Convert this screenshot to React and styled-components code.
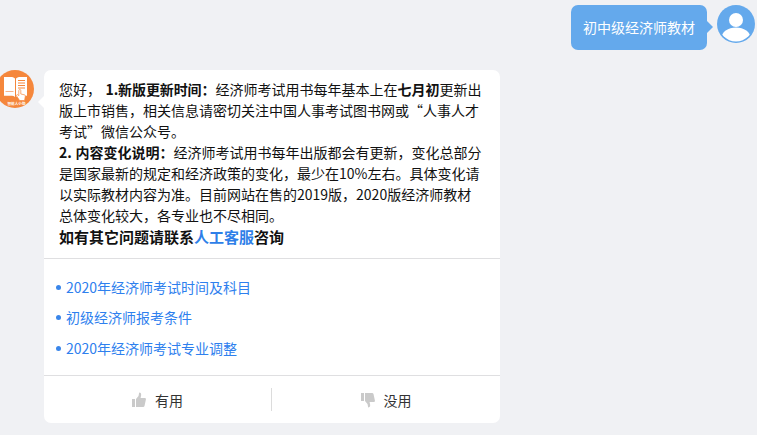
import React from "react";
import styled, { createGlobalStyle } from "styled-components";

const Global = createGlobalStyle`
  html, body { margin: 0; padding: 0; background: #f0f1f4; }
  body { font-family: "Noto Sans CJK SC", "Liberation Sans", sans-serif; font-size: 14px; color: #111; }
`;
const Page = styled.div`
  width: 757px; height: 435px; overflow: hidden; box-sizing: border-box;
  display: flex; flex-direction: column; padding-top: 5px;
`;
const UserRow = styled.div`
  display: flex; justify-content: flex-end; align-items: flex-start; gap: 10px; padding-right: 2px; height: 65px;
`;
const UserBubble = styled.div`
  position: relative; width: 136px; height: 45px; box-sizing: border-box;
  background: #64a9ec; color: #fff; border-radius: 7px; line-height: 45px; text-align: center;
  &::after {
    content: ""; position: absolute; right: -6px; top: 16px; width: 0; height: 0;
    border-left: 6px solid #64a9ec; border-top: 6px solid transparent; border-bottom: 6px solid transparent;
  }
`;
const UserAvatar = styled.svg`width: 38px; height: 38px; display: block; flex: none;`;
const BotRow = styled.div`
  display: flex; align-items: flex-start; gap: 9px;
`;
const BotAvatar = styled.svg`
  width: 35px; height: 40px; flex: none; display: block;
`;
const AvatarLabel = styled.text`
  font-size: 3.6px; font-weight: 700; fill: #fff; text-anchor: middle;
`;
const Card = styled.div`
  position: relative; width: 456px; height: 353px; background: #fff; border-radius: 7px;
  display: flex; flex-direction: column;
  &::before {
    content: ""; position: absolute; left: -6px; top: 26px; width: 0; height: 0;
    border-right: 6px solid #fff; border-top: 6px solid transparent; border-bottom: 6px solid transparent;
  }
`;
const Answer = styled.div`
  padding: 9px 15px 0; height: 189px; box-sizing: border-box; border-bottom: 1px solid #dfdfe1;
  line-height: 21.05px;
`;
const Strong = styled.b`font-weight: 700;`;
const Lead = styled(Strong)`margin-left: 4.5px; letter-spacing: -0.1px;`;
const Second = styled(Strong)`word-spacing: 0.4px;`;
const Closing = styled(Strong)`font-size: 15px;`;
const Blue = styled.span`color: #2e7fe8;`;
const Links = styled.ul`
  list-style: none; margin: 0; padding: 17.5px 0 0 12px; height: 117px; box-sizing: border-box;
  border-bottom: 1px solid #dfdfe1; display: flex; flex-direction: column; gap: 9.5px;
`;
const LinkItem = styled.li`
  display: flex; align-items: center; gap: 5px; line-height: 21px; color: #2e80ee;
  &::before { content: ""; width: 5px; height: 5px; border-radius: 50%; background: #3a86ea; flex: none; }
`;
const Feedback = styled.div`
  flex: 1; display: flex; align-items: center;
`;
const FeedbackButton = styled.div`
  height: 23px; display: flex; align-items: center; justify-content: center; gap: 9px; color: #333;
  width: 227px;
  & + & { border-left: 1px solid #dcdcdc; width: 228px; }
`;
const Thumb = styled.svg`width: 14px; height: 16px; display: block; fill: #cacaca;`;

const Up = () => (
  <Thumb viewBox="0 0 14 16"><path d="M0 7h3v8H0zM4 7 6.500 4 7.200 .5c1.600 0 2.200 1.300 1.900 3L8.600 6h4c1 0 1.500.8 1.300 1.600l-1.400 6.500c-.2.600-.7.900-1.300.9H4z" /></Thumb>
);
const Down = () => (
  <Thumb viewBox="0 0 14 16"><path d="M0 1h3v8H0zM4 1h7.200c.6 0 1.100.3 1.300.9l1.400 6.500c.2.800-.3 1.600-1.300 1.600h-4l.5 2.500c.3 1.700-.3 3-1.900 3L6.500 12 4 9z" /></Thumb>
);

export default function App() {
  return (
    <Page>
      <Global />
      <UserRow>
        <UserBubble>初中级经济师教材</UserBubble>
        <UserAvatar viewBox="0 0 38 38">
          <defs><clipPath id="c"><circle cx="19" cy="19" r="17.500" /></clipPath></defs>
          <circle cx="19" cy="19" r="19" fill="#64a9ec" />
          <circle cx="19" cy="15" r="7" fill="#fff" />
          <ellipse cx="19" cy="33" rx="14.500" ry="10.500" fill="#fff" clipPath="url(#c)" />
        </UserAvatar>
      </UserRow>
      <BotRow>
        <BotAvatar viewBox="0 0 35 40">
          <circle cx="15" cy="19" r="19" fill="#f5873c" />
          <path d="M4 7h8c1 0 2 .5 3 1.500V27c-1-.8-2-1.300-3-1.300H4z" fill="#fff" />
          <path d="M16 8.500c1-1 2-1.500 3-1.500h8v18.700h-8c-1 0-2 .5-3 1.300z" fill="#fff" />
          <path d="M5.500 21.500h8" stroke="#f8b48a" strokeWidth="1" />
          <path d="M18 10.500h7M18 13h7M18 15.500h7M18 18h7" stroke="#f5873c" strokeWidth="1" />
          <path d="M18.800 20.500c0-1.400 2-1.400 2 0v3.500l3.600.8c.8.200 1 .8.900 1.500l-.7 4.200h-5l-3-4.500c-.6-1 .6-1.800 1.400-1.100l.8.800z" fill="#fff" stroke="#f5873c" strokeWidth=".7" />
          <AvatarLabel x="16.500" y="34.500">智能人小助</AvatarLabel>
        </BotAvatar>
        <Card>
          <Answer>
            您好，<Lead>1.新版更新时间：</Lead>经济师考试用书每年基本上在<Strong>七月初</Strong>更新出版上市销售，相关信息请密切关注中国人事考试图书网或“人事人才考试”微信公众号。
            <br />
            <Second>2. 内容变化说明：</Second>经济师考试用书每年出版都会有更新，变化总部分是国家最新的规定和经济政策的变化，最少在10%左右。具体变化请以实际教材内容为准。目前网站在售的2019版，2020版经济师教材总体变化较大，各专业也不尽相同。
            <br />
            <Closing>如有其它问题请联系<Blue>人工客服</Blue>咨询</Closing>
          </Answer>
          <Links>
            <LinkItem>2020年经济师考试时间及科目</LinkItem>
            <LinkItem>初级经济师报考条件</LinkItem>
            <LinkItem>2020年经济师考试专业调整</LinkItem>
          </Links>
          <Feedback>
            <FeedbackButton><Up />有用</FeedbackButton>
            <FeedbackButton><Down />没用</FeedbackButton>
          </Feedback>
        </Card>
      </BotRow>
    </Page>
  );
}
